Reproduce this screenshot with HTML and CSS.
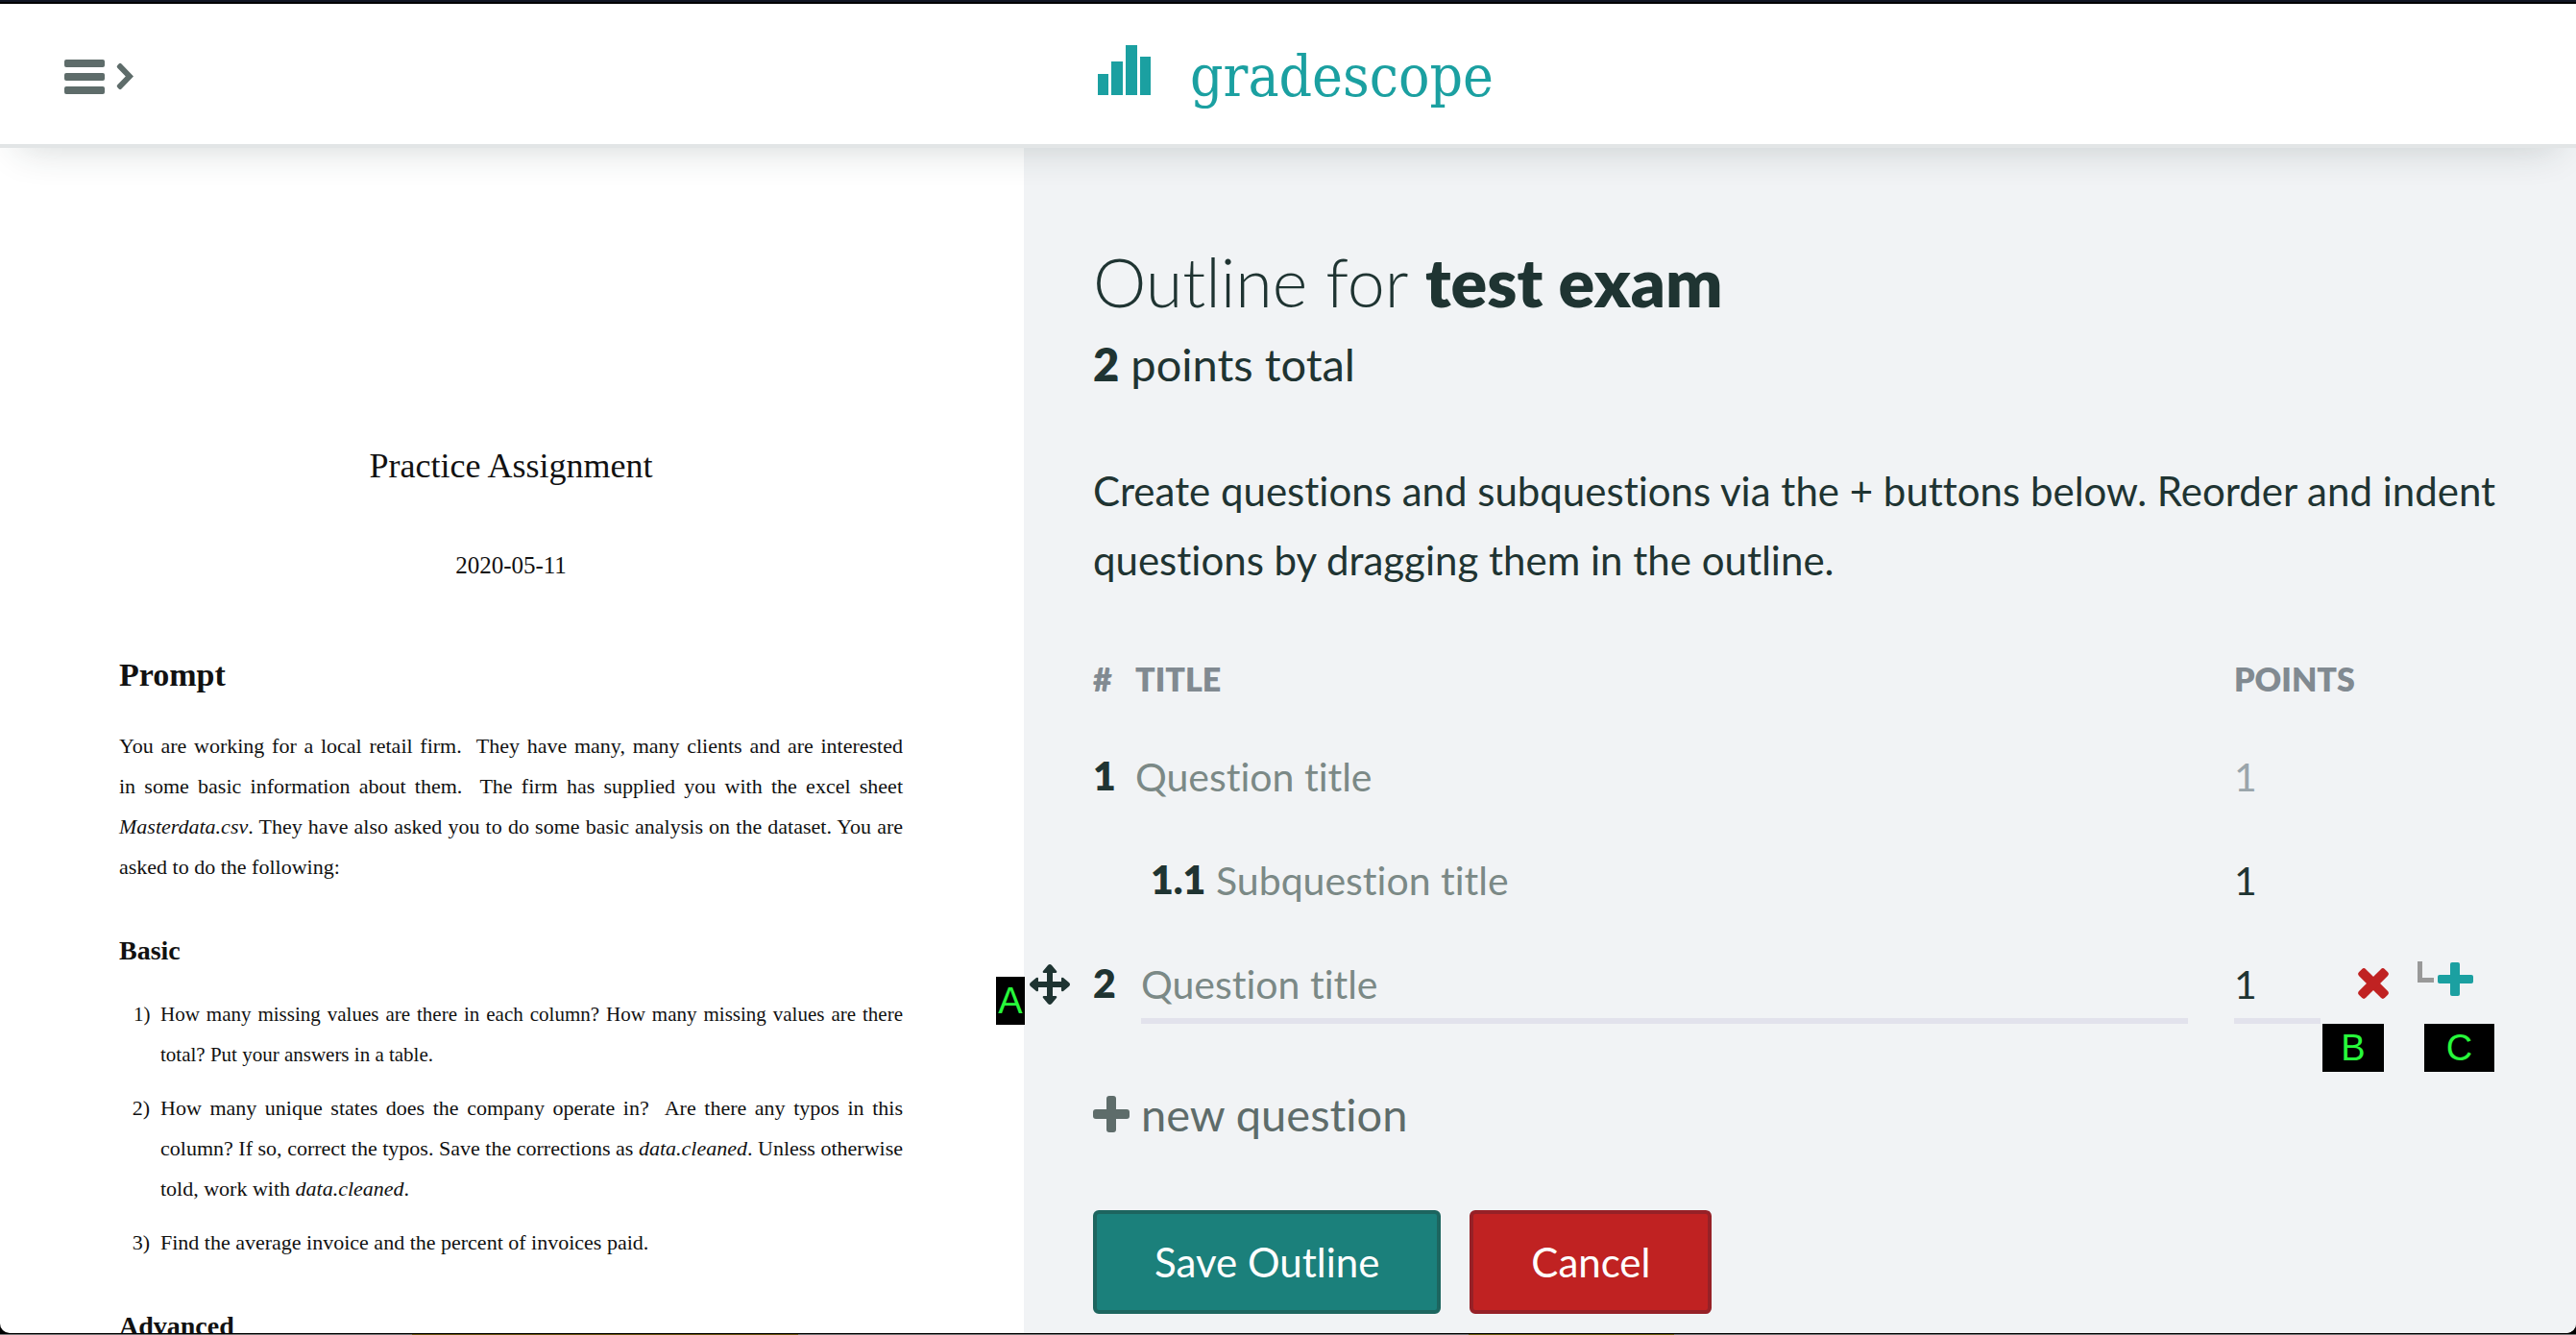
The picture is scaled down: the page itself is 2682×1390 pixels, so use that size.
FILE: index.html
```html
<!DOCTYPE html>
<html lang="en">
<head>
<meta charset="utf-8">
<title>Edit Outline | Gradescope</title>
<link rel="stylesheet" href="styles.css">
</head>
<body>
<div class="window">
  <header class="topbar">
    <button class="menu" type="button" aria-label="Open navigation">
      <svg width="72" height="36" viewBox="0 0 72 36" fill="currentColor" aria-hidden="true">
        <rect x="0" y="0" width="42" height="8" rx="2"/>
        <rect x="0" y="14" width="42" height="8" rx="2"/>
        <rect x="0" y="28" width="42" height="8" rx="2"/>
        <path d="M59.500 4.500a2 2 0 0 0-2.800 0l-1.400 1.400a2 2 0 0 0 0 2.800L63.800 17.500l-8.500 8.800a2 2 0 0 0 0 2.800l1.400 1.400a2 2 0 0 0 2.800 0L72 17.500z"/>
      </svg>
    </button>
    <a class="brand" href="#">
      <svg class="brand-mark" width="56" height="52" viewBox="0 0 56 52" fill="currentColor" aria-hidden="true">
        <rect x="0" y="30" width="11" height="22"/>
        <rect x="14" y="17" width="12" height="35"/>
        <rect x="29" y="0" width="12" height="52"/>
        <rect x="44" y="12" width="11" height="40"/>
      </svg>
      <span class="brand-name">gradescope</span>
    </a>
  </header>

  <div class="panes">
    <article class="document">
      <h2 class="doc-title">Practice Assignment</h2>
      <p class="doc-date">2020-05-11</p>
      <h3 class="doc-section">Prompt</h3>
      <p class="doc-text">You are working for a local retail firm.&nbsp; They have many, many clients and are interested in&nbsp;some basic information about them.&nbsp; The firm has supplied you with the excel sheet <em>Masterdata.csv</em>. They have also asked you to do some basic analysis on the dataset. You are asked to do the following:</p>
      <h4 class="doc-subsection">Basic</h4>
      <ol class="doc-list">
        <li class="compact">How many missing values are there in each column? How many missing values are there total? Put your answers in a table.</li>
        <li>How many unique states does the company operate in?&nbsp; Are there any typos in this column? If so, correct the typos. Save the corrections as <em>data.cleaned</em>. Unless otherwise told, work with <em>data.cleaned</em>.</li>
        <li>Find the average invoice and the percent of invoices paid.</li>
      </ol>
      <h4 class="doc-subsection">Advanced</h4>
    </article>

    <main class="outline">
      <h1 class="title">Outline for <strong>test exam</strong></h1>
      <p class="total"><strong>2</strong> points total</p>
      <p class="help">Create questions and subquestions via the + buttons below. Reorder and indent questions by dragging them in the outline.</p>

      <form>
        <div class="row head">
          <span class="num">#</span>
          <span class="name">Title</span>
          <span class="points">Points</span>
          <span class="actions"></span>
        </div>
        <ol class="rows">
          <li class="row">
            <label class="num" for="q1">1</label>
            <input class="name" id="q1" type="text" placeholder="Question title">
            <input class="points" type="text" value="1" aria-label="Points for question 1" disabled>
            <span class="actions"></span>
          </li>
          <li class="row sub">
            <label class="num" for="q11">1.1</label>
            <input class="name" id="q11" type="text" placeholder="Subquestion title">
            <input class="points" type="text" value="1" aria-label="Points for question 1.1">
            <span class="actions"></span>
          </li>
          <li class="row active">
            <span class="badge badge-a">A</span>
            <span class="handle">
              <svg width="42" height="42" viewBox="0 0 42 42" fill="currentColor" aria-hidden="true">
                <path d="M21 0Q22 0 23 1L28 7Q29 9 27 9H24V18H33V15Q33 13 35 14L41 19Q43 21 41 23L35 28Q33 29 33 27V24H24V33H27Q29 33 28 35L23 41Q21 43 19 41L14 35Q13 33 15 33H18V24H9V27Q9 29 7 28L1 23Q-1 21 1 19L7 14Q9 13 9 15V18H18V9H15Q13 9 14 7L19 1Q20 0 21 0Z"/>
              </svg>
            </span>
            <label class="num" for="q2">2</label>
            <input class="name" id="q2" type="text" placeholder="Question title">
            <input class="points" type="text" value="1" aria-label="Points for question 2">
            <span class="actions">
              <button class="icon remove" type="button" aria-label="Delete question">
                <svg width="32" height="32" viewBox="0 0 32 32" aria-hidden="true">
                  <g transform="rotate(45 16 16)" fill="currentColor"><rect x="-3" y="11" width="38" height="10" rx="3"/><rect x="11" y="-3" width="10" height="38" rx="3"/></g>
                </svg>
              </button>
              <button class="icon add" type="button" aria-label="Add subquestion">
                <svg width="58" height="37" viewBox="0 0 58 37" aria-hidden="true">
                  <path d="M2.500 1V20.500H17" fill="none" stroke="#999" stroke-width="5"/>
                  <g fill="currentColor"><rect x="21" y="15" width="37" height="9" rx="2"/><rect x="34" y="2" width="10" height="35" rx="2"/></g>
                </svg>
              </button>
            </span>
            <span class="badge badge-b">B</span>
            <span class="badge badge-c">C</span>
          </li>
        </ol>
        <button class="new" type="button">
          <svg width="38" height="38" viewBox="0 0 38 38" fill="currentColor" aria-hidden="true">
            <rect x="0" y="14" width="38" height="10" rx="3"/><rect x="14" y="0" width="10" height="38" rx="3"/>
          </svg>
          new question
        </button>
        <div class="buttons">
          <button class="btn save" type="submit">Save Outline</button>
          <button class="btn cancel" type="button">Cancel</button>
        </div>
      </form>
    </main>
  </div>
</div>
</body>
</html>
```
FILE: styles.css
```css
* {
  box-sizing: border-box;
}

body {
  margin: 0;
  height: 100vh;
  padding: 4px 0 2px;
  overflow: hidden;
  background:
    linear-gradient(90deg, #777 0 16%, #6b5410 16% 31%, #777 31% 57%, #6b5e10 57% 65%, #777 65%) bottom / 100% 1px no-repeat,
    linear-gradient(#111624, #111624) top / 100% 2px no-repeat,
    #000;
  color: #1f3432;
  font-family: Lato, "Open Sans", sans-serif;
  font-size: 41px;
  font-variant-ligatures: none;
}

button,
input {
  font: inherit;
  font-variant-ligatures: none;
  color: inherit;
  background: none;
  border: 0;
  padding: 0;
}

.window {
  height: 100%;
  display: flex;
  flex-direction: column;
  overflow: hidden;
  background: #fff;
  border-radius: 0 0 10px 10px;
}

/* Top bar */
.topbar {
  position: relative;
  z-index: 1;
  flex: none;
  display: flex;
  align-items: center;
  justify-content: center;
  height: 150px;
  border-bottom: 4px solid #e2e5e6;
  background: #fff;
  box-shadow: 0 20px 40px -20px rgba(31, 52, 50, 0.2);
}

.menu {
  position: absolute;
  left: 67px;
  top: 58px;
  color: #5e6c6a;
}

.menu svg {
  display: block;
}

.brand {
  display: flex;
  align-items: center;
  gap: 40px;
  padding: 4px 0 0 16px;
  color: #1ba0a1;
  text-decoration: none;
}

.brand-mark {
  margin-bottom: 12px;
}

.brand-name {
  font-family: "DejaVu Serif Condensed", "DejaVu Serif", serif;
  font-size: 60px;
}

/* Panes */
.panes {
  flex: 1;
  min-height: 0;
  display: grid;
  grid-template-columns: 1066fr 1616fr;
}

/* Assignment page */
@counter-style paren {
  system: extends decimal;
  suffix: ")\2002";
}

.document {
  overflow: hidden;
  padding: 310px 126px 0 124px;
  color: #111;
  font-family: "Liberation Serif", serif;
  font-size: 22px;
  line-height: 42px;
}

.doc-title,
.doc-date {
  margin: 0;
  text-align: center;
  font-weight: 400;
}

.doc-title {
  font-size: 36px;
}

.doc-date {
  margin-top: 62px;
  font-size: 25px;
}

.doc-section {
  margin: 72px 0 32px;
  font-size: 34px;
}

.doc-subsection {
  margin: 45px 0 24px;
  font-size: 28px;
}

.doc-text {
  margin: 0;
  text-align: justify;
}

.doc-list {
  margin: 0;
  padding: 0 0 0 43px;
  list-style: paren;
  text-align: justify;
}

.doc-list .compact {
  font-size: 21px;
}

.doc-list li + li {
  margin-top: 14px;
}

/* Outline */
.outline {
  padding: 97px 72px 0;
  background: #f1f3f5;
}

.title {
  margin: 0;
  font-size: 70px;
  font-weight: 300;
  line-height: 84px;
}

.title strong {
  font-weight: 800;
}

.total {
  margin: 0;
  font-size: 47px;
  line-height: 88px;
}

.total strong {
  font-weight: 800;
}

.help {
  margin: 52px 0 22px;
  font-size: 42px;
  line-height: 72px;
}

/* Question rows */
.rows {
  margin: 0;
  padding: 0;
  list-style: none;
}

.row {
  position: relative;
  display: flex;
  align-items: flex-end;
  height: 108px;
}

.num {
  flex: none;
  width: 44px;
  font-weight: 800;
  line-height: 72px;
  padding-bottom: 6px;
}

.name {
  flex: 1;
  min-width: 0;
  height: 78px;
  margin-right: 48px;
  border-bottom: 6px solid transparent;
}

.points {
  flex: none;
  width: 90px;
  height: 78px;
  border-bottom: 6px solid transparent;
}

.actions {
  flex: none;
  width: 194px;
}

.name::placeholder {
  color: #7b8986;
  opacity: 1;
}

.points:disabled {
  color: #9aa5ab;
}

.head {
  margin-bottom: -7px;
  color: #818a91;
  font-size: 34px;
  font-weight: 800;
  text-transform: uppercase;
  line-height: 72px;
}

.sub {
  padding-left: 60px;
}

.sub .num {
  width: 68px;
}

.active .num {
  width: 50px;
}

.active .name,
.active .points {
  border-color: #e2e2ec;
}

.handle {
  position: absolute;
  left: -66px;
  bottom: 20px;
}

.handle svg,
.icon svg {
  display: block;
}

.active .actions {
  display: flex;
  align-items: flex-start;
  gap: 30px;
  height: 66px;
  padding-left: 39px;
}

.remove {
  padding-top: 8px;
  color: #c02222;
}

.add {
  color: #1ba0a1;
}

/* Callout letters over the outline */
.badge {
  position: absolute;
  height: 50px;
  background: #000;
  color: #27f93b;
  font-family: "Liberation Sans", Arial, sans-serif;
  font-size: 38px;
  line-height: 50px;
  text-align: center;
}

.badge-a {
  left: -101px;
  top: 59px;
  width: 30px;
}

.badge-b {
  right: 128px;
  top: 108px;
  width: 64px;
}

.badge-c {
  right: 13px;
  top: 108px;
  width: 73px;
}

/* Buttons */
.new {
  display: flex;
  align-items: center;
  gap: 12px;
  margin-top: 58px;
  color: #5e6c6a;
  font-size: 47px;
  line-height: 72px;
}

.buttons {
  display: flex;
  gap: 30px;
  margin-top: 64px;
}

.btn {
  height: 108px;
  padding: 0 60px;
  border: 4px solid;
  border-radius: 6px;
  color: #fff;
  font-size: 42px;
}

.save {
  background: #1b807b;
  border-color: #1d655f;
}

.cancel {
  background: #c02222;
  border-color: #962127;
}
```
